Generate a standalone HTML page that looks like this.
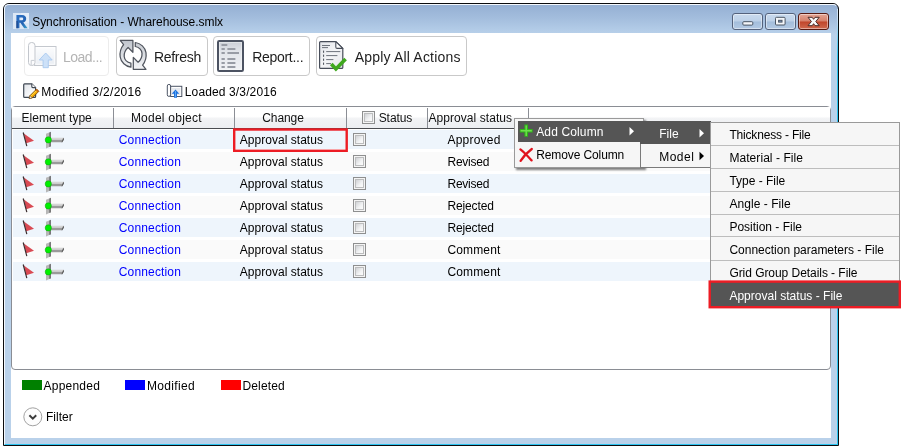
<!DOCTYPE html>
<html><head><meta charset="utf-8"><title>Synchronisation</title>
<style>
html,body{margin:0;padding:0;background:#fff;}
body{width:901px;height:447px;position:relative;overflow:hidden;font-family:"Liberation Sans",sans-serif;}
.a{position:absolute;box-sizing:border-box;}
.t{position:absolute;white-space:nowrap;line-height:1;font-family:"Liberation Sans",sans-serif;}
#win{left:3px;top:3px;width:836px;height:443px;border:1px solid #0b0c0e;border-radius:6px 6px 0 0;
 background:linear-gradient(#94afd3 0px,#a3bddd 14px,#b4cde8 27px,#b9d1ea 31px,#b9d1ea 100%);}
#winhi{left:4px;top:4px;width:834px;height:441px;border:1px solid #f4f8fd;border-right-color:transparent;border-bottom-color:#2cc4f0;border-radius:5px 5px 0 0;}
#client{left:11px;top:33px;width:820px;height:405px;background:#fff;}
.tb{border:1px solid #c9c9c9;border-radius:4px;background:#fff;top:36px;height:40px;}
.cap{top:13px;height:17px;border:1px solid #54627c;border-radius:3px;
 background:linear-gradient(#c9daee 0,#bdd1e8 48%,#a3bddb 52%,#b3cae4 100%);box-shadow:inset 0 0 0 1px rgba(255,255,255,.45);}
#lv{left:11px;top:106px;width:820px;height:264px;border:1px solid #8a8d94;border-radius:4px;background:#fff;}
#hdr{left:12px;top:107px;width:818px;height:21px;background:linear-gradient(#fff 0,#fff 45%,#f2f3f5 55%,#eceef1 100%);}
#hdrline{left:12px;top:128px;width:818px;height:1px;background:#4a4c50;}
.sep{top:108px;width:1px;height:20px;background:#8b8e95;}
.band{left:12.5px;width:817.5px;height:18.6px;}
.cb{width:13px;height:13px;border:1px solid #8e8f8f;background:#f4f4f4;}
.cb i{position:absolute;left:1px;top:1px;width:9px;height:9px;border:1px solid #bcbdbe;box-sizing:border-box;background:linear-gradient(135deg,#d0d2d5,#f2f3f4 60%,#fcfcfc);display:block;}
.menu{background:#f6f6f6;border:1px solid #9a9a9a;}
.sel{background:#555555;}
.red{border:2px solid #ed1c24;}
#redge{left:837px;top:9px;width:1px;height:436px;background:linear-gradient(#d3e4f5 0,#c2dcf3 12px,#5fcdf2 34px,#2cc4f0 48px,#2cc4f0 100%);}
#txt{position:absolute;left:0;top:0;width:901px;height:447px;will-change:transform;}

</style></head>
<body>
<div class="a" id="win"></div>
<div class="a" id="winhi"></div>
<div class="a" id="redge"></div>
<!-- caption buttons -->
<div class="a cap" style="left:732px;width:31px"></div>
<div class="a cap" style="left:765px;width:31px"></div>
<div class="a cap" style="left:798px;width:31px;border-color:#561a12;background:linear-gradient(#e4a594 0,#d5806a 48%,#c0452a 52%,#cf6a4f 100%)"></div>
<svg class="a" style="left:732px;top:13px" width="98" height="17" viewBox="0 0 98 17">
 <rect x="10.8" y="8.7" width="10" height="3.4" rx="1" fill="#f4f6f9" stroke="#4a5563" stroke-width="1"/>
 <rect x="43.5" y="4.3" width="9.6" height="7.7" rx="1" fill="#f4f6f9" stroke="#4a5563" stroke-width="1"/>
 <rect x="46.6" y="7.3" width="3.4" height="1.8" fill="#7f9cc6" stroke="#4a5563" stroke-width="1"/>
 <path d="M76 4.3 L80.2 4.3 L81.6 6.3 L83 4.3 L87.2 4.3 L83.8 8.5 L87.2 12.7 L83 12.7 L81.6 10.7 L80.2 12.7 L76 12.7 L79.4 8.5 Z" fill="#fafafa" stroke="#4a2a26" stroke-width="1" stroke-linejoin="round"/>
</svg>
<div class="a" id="client"></div>
<!-- app icon R -->
<svg class="a" style="left:13px;top:13px" width="16" height="16" viewBox="0 0 16 16">
 <defs><linearGradient id="rr" x1="0" y1="0" x2="1" y2="1"><stop offset="0" stop-color="#2a6fc4"/><stop offset=".6" stop-color="#2564b4"/><stop offset="1" stop-color="#3aa3cc"/></linearGradient></defs>
 <rect width="16" height="16" fill="#dce7f5"/><rect x="8" width="8" height="10" fill="#e6eef9"/>
 <path d="M3.4 15.2 V2 H9 C12 2 13.2 3.8 13.2 5.8 C13.2 7.8 12 9 10.3 9.4 L14.6 15.2 H11.2 L7.4 9.8 H6.4 V15.2 Z M6.4 4.6 V7.3 H8.6 C9.7 7.3 10.2 6.8 10.2 5.9 C10.2 5.1 9.7 4.6 8.6 4.6 Z" fill="url(#rr)" fill-rule="evenodd"/>
 <path d="M3.4 15.2 V8 L4.6 8 L4.6 15.2 Z" fill="#17397a" opacity=".8"/>
</svg>
<!-- toolbar buttons -->
<div class="a tb" style="left:24px;width:85px;border-color:#ececec"></div>
<div class="a tb" style="left:115.5px;width:92px"></div>
<div class="a tb" style="left:213px;width:97px"></div>
<div class="a tb" style="left:316px;width:151px"></div>
<!-- load icon -->
<svg class="a" style="left:26px;top:39px" width="34" height="32" viewBox="26 39 34 32">
 <defs><linearGradient id="lg" x1="0" y1="0" x2="0" y2="1"><stop offset="0" stop-color="#fcfdfe"/><stop offset="1" stop-color="#e9edf3"/></linearGradient></defs><rect x="34.5" y="46.5" width="21.5" height="19" fill="url(#lg)" stroke="#c4c8ce" stroke-width="1"/><rect x="35.8" y="47.8" width="19" height="16.4" fill="none" stroke="#fff" stroke-width=".8"/>
 <rect x="28.5" y="42.5" width="6.5" height="23" rx="3" fill="#fcfcfd" stroke="#c2c6cc" stroke-width="1"/>
 <path d="M31.2 65 L31.2 60.4 L34.4 60.4" fill="none" stroke="#c8ccd2" stroke-width="1"/>
 <path d="M45.7 53 L52.2 60 L48.3 60 L48.3 67.7 L43.1 67.7 L43.1 60 L39.2 60 Z" fill="#cde1f8" stroke="#a9c9ef" stroke-width=".9"/>
</svg>
<!-- refresh icon -->
<svg class="a" style="left:118px;top:38px" width="32" height="34" viewBox="118 38 32 34">
 <defs><linearGradient id="rg" x1="0" y1="0" x2="0" y2="1"><stop offset="0" stop-color="#bfc4cc"/><stop offset="1" stop-color="#f4f5f7"/></linearGradient>
 <linearGradient id="rg2" x1="0" y1="1" x2="0" y2="0"><stop offset="0" stop-color="#c6cad1"/><stop offset="1" stop-color="#f4f5f7"/></linearGradient></defs>
 <path d="M120.2 40.4 H132.9 V52.3 L128.1 47.5 C125.2 50 124 53.5 124.2 56.5 C124.6 59.8 126.8 62.3 130.9 63.2 V67.2 C125.5 66.5 121 62.3 120.2 57 C119.6 52.5 120.8 48 123.6 44.6 Z" fill="url(#rg)" stroke="#50555e" stroke-width="1.25" stroke-linejoin="round"/>
 <path transform="rotate(180 133.1 54.85)" d="M120.2 40.4 H132.9 V52.3 L128.1 47.5 C125.2 50 124 53.5 124.2 56.5 C124.6 59.8 126.8 62.3 130.9 63.2 V67.2 C125.5 66.5 121 62.3 120.2 57 C119.6 52.5 120.8 48 123.6 44.6 Z" fill="url(#rg2)" stroke="#50555e" stroke-width="1.25" stroke-linejoin="round"/>
</svg>
<!-- report icon -->
<svg class="a" style="left:216px;top:39px" width="30" height="34" viewBox="216 39 30 34">
 <defs><linearGradient id="pg" x1="0" y1="0" x2="0" y2="1"><stop offset="0" stop-color="#c9cdd5"/><stop offset=".35" stop-color="#e2e5ea"/><stop offset="1" stop-color="#f1f2f5"/></linearGradient></defs>
 <rect x="218" y="41" width="25" height="30" rx="1.2" fill="url(#pg)" stroke="#4c5362" stroke-width="2"/>
 <rect x="219.4" y="42.4" width="22.2" height="27.2" fill="none" stroke="#f5f6f8" stroke-width=".6" opacity=".8"/>
 <g fill="#989ca5">
 <rect x="221.5" y="44" width="5.8" height="2"/>
 <rect x="221.5" y="48" width="3.3" height="2"/><rect x="227.4" y="48" width="8" height="2"/>
 <rect x="221.5" y="52" width="3.3" height="2"/><rect x="227.4" y="52" width="11.6" height="2"/>
 <rect x="221.5" y="58" width="3.3" height="2"/><rect x="227.4" y="58" width="8" height="2"/>
 <rect x="221.5" y="62" width="3.3" height="2"/><rect x="227.4" y="62" width="8" height="2"/>
 <rect x="221.5" y="66" width="3.3" height="2"/><rect x="227.4" y="66" width="8" height="2"/>
 </g>
</svg>
<!-- apply icon -->
<svg class="a" style="left:317px;top:39px" width="34" height="34" viewBox="317 39 34 34">
 <defs><linearGradient id="dg" x1="0" y1="0" x2="1" y2="1"><stop offset="0" stop-color="#e1e4e9"/><stop offset=".5" stop-color="#f4f5f7"/><stop offset="1" stop-color="#e4e6ea"/></linearGradient></defs>
 <path d="M320.6 41.6 H335.8 L342.8 48.4 V67.4 Q342.8 68.4 341.8 68.4 H320.6 Q319.6 68.4 319.6 67.4 V42.6 Q319.6 41.6 320.6 41.6 Z" fill="url(#dg)" stroke="#474d59" stroke-width="1.2"/>
 <path d="M335.8 41.6 V47 Q335.8 48.4 337.2 48.4 H342.8 Z" fill="#fcfcfd" stroke="#474d59" stroke-width="1.1" stroke-linejoin="round"/>
 <g stroke="#6d727b" stroke-width="1" fill="none">
 <path d="M322 45.5 H330"/><path d="M322 47.6 H328"/>
 <path d="M326.2 51.6 H340.3"/><path d="M326.2 55.6 H337.4"/><path d="M326.2 59.6 H333.4"/><path d="M326.2 63.6 H331"/>
 </g>
 <g fill="#555a63"><rect x="323" y="50.6" width="1.1" height="2.2"/><rect x="323" y="54.6" width="1.1" height="2.2"/><rect x="323" y="58.6" width="1.1" height="2.2"/><rect x="323" y="62.6" width="1.1" height="2.2"/></g>
 <path d="M331.3 64 L335.9 68.9 L345.6 58.9" fill="none" stroke="#3fa81e" stroke-width="3.6" stroke-linejoin="miter"/>
</svg>
<!-- status line icons -->
<svg class="a" style="left:20px;top:80px" width="22" height="22" viewBox="20 80 22 22">
 <defs><linearGradient id="mg" x1="0" y1="0" x2="1" y2="1"><stop offset="0" stop-color="#dfe3e8"/><stop offset=".6" stop-color="#f6f7f9"/><stop offset="1" stop-color="#fff"/></linearGradient></defs>
 <path d="M24.6 83.8 H31.8 L35.6 87.6 V96.4 Q35.6 97.3 34.7 97.3 H24.6 Q23.7 97.3 23.7 96.4 V84.7 Q23.7 83.8 24.6 83.8 Z" fill="url(#mg)" stroke="#3f4752" stroke-width="1.2"/>
 <path d="M31.8 83.8 V86.6 Q31.8 87.6 32.8 87.6 H35.6" fill="#fff" stroke="#3f4752" stroke-width="1.1"/>
 <path d="M29.2 98.5 L30 95.6 L36.6 89 L38.9 91.3 L32.3 97.9 Z" fill="#f7a600" stroke="#5a3608" stroke-width=".7"/>
 <path d="M30.6 96.6 L37 90.2" stroke="#ffe14a" stroke-width="1" fill="none"/>
 <path d="M36.6 89 L38.9 91.3 L37.9 92.3 L35.6 90 Z" fill="#c2601a"/>
 <path d="M29.2 98.5 L30 95.6 L32.3 97.9 Z" fill="#f3f3f3" stroke="#5a3608" stroke-width=".5"/>
</svg>
<svg class="a" style="left:165px;top:82px" width="20" height="18" viewBox="165 82 20 18">
 <rect x="170.6" y="86.3" width="11.2" height="10.2" fill="#fff" stroke="#4d5666" stroke-width="1"/>
 <rect x="172" y="88" width="8.4" height="7" fill="#e6e9ee"/>
 <rect x="167.3" y="84.4" width="3.3" height="12" rx="1.6" fill="#fff" stroke="#4d5666" stroke-width="1"/>
 <path d="M175.5 89.5 L179.3 93.8 L177 93.8 L177 97.8 L174 97.8 L174 93.8 L171.7 93.8 Z" fill="#1f72dc"/>
 <path d="M175.5 91 L175.5 97" stroke="#58a6f5" stroke-width="1" fill="none"/>
</svg>
<!-- list view -->
<div class="a" id="lv"></div>
<div class="a" id="hdr"></div>
<div class="a" id="hdrline"></div>
<div class="a sep" style="left:113px"></div>
<div class="a sep" style="left:234px"></div>
<div class="a sep" style="left:346px"></div>
<div class="a sep" style="left:427px"></div>
<div class="a sep" style="left:528px"></div>
<div class="a band" style="top:130px;background:#eef5fc"></div>
<div class="a band" style="top:152px;background:#fafafa"></div>
<div class="a band" style="top:174px;background:#eef5fc"></div>
<div class="a band" style="top:196px;background:#fafafa"></div>
<div class="a band" style="top:218px;background:#eef5fc"></div>
<div class="a band" style="top:240px;background:#fafafa"></div>
<div class="a band" style="top:262px;background:#eef5fc"></div>
<div class="a cb" style="left:362px;top:111px"><i></i></div>
<div class="a cb" style="left:353px;top:133.0px"><i></i></div>
<svg class="a" style="left:20px;top:129.5px" width="48" height="20" viewBox="20 -10 48 20">
 <path d="M23.8 -6.6 L34 0.7 L26.2 3.3 Z" fill="#d94a53"/>
 <path d="M23.2 -7.5 L26.8 6.1" stroke="#3d2f31" stroke-width="1.2" fill="none"/>
 <path d="M50.9 -2.3 H63.9 V-0.2 H50.9 Z" fill="#d6d6d6"/>
 <path d="M50.9 -0.2 H63.9 L62.2 2.3 H50.9 Z" fill="#9a9a9a"/>
 <path d="M63.9 -2.3 L63.9 -0.4 L62.3 2.3 L61.5 2.3 L62.9 -1.2 Z" fill="#565656"/>
 <path d="M46 -6.3 L49.2 -7.6 L49.2 7.1 L46 8.4 Z" fill="#b7b7b7"/>
 <path d="M49.2 -7.6 L50.9 -8.3 L50.9 6.4 L49.2 7.1 Z" fill="#6a6a6a"/>
 <circle cx="48.3" cy="-0.1" r="3.1" fill="#00f000" stroke="#14a814" stroke-width=".6"/>
</svg>
<div class="a cb" style="left:353px;top:155.0px"><i></i></div>
<svg class="a" style="left:20px;top:151.5px" width="48" height="20" viewBox="20 -10 48 20">
 <path d="M23.8 -6.6 L34 0.7 L26.2 3.3 Z" fill="#d94a53"/>
 <path d="M23.2 -7.5 L26.8 6.1" stroke="#3d2f31" stroke-width="1.2" fill="none"/>
 <path d="M50.9 -2.3 H63.9 V-0.2 H50.9 Z" fill="#d6d6d6"/>
 <path d="M50.9 -0.2 H63.9 L62.2 2.3 H50.9 Z" fill="#9a9a9a"/>
 <path d="M63.9 -2.3 L63.9 -0.4 L62.3 2.3 L61.5 2.3 L62.9 -1.2 Z" fill="#565656"/>
 <path d="M46 -6.3 L49.2 -7.6 L49.2 7.1 L46 8.4 Z" fill="#b7b7b7"/>
 <path d="M49.2 -7.6 L50.9 -8.3 L50.9 6.4 L49.2 7.1 Z" fill="#6a6a6a"/>
 <circle cx="48.3" cy="-0.1" r="3.1" fill="#00f000" stroke="#14a814" stroke-width=".6"/>
</svg>
<div class="a cb" style="left:353px;top:177.0px"><i></i></div>
<svg class="a" style="left:20px;top:173.5px" width="48" height="20" viewBox="20 -10 48 20">
 <path d="M23.8 -6.6 L34 0.7 L26.2 3.3 Z" fill="#d94a53"/>
 <path d="M23.2 -7.5 L26.8 6.1" stroke="#3d2f31" stroke-width="1.2" fill="none"/>
 <path d="M50.9 -2.3 H63.9 V-0.2 H50.9 Z" fill="#d6d6d6"/>
 <path d="M50.9 -0.2 H63.9 L62.2 2.3 H50.9 Z" fill="#9a9a9a"/>
 <path d="M63.9 -2.3 L63.9 -0.4 L62.3 2.3 L61.5 2.3 L62.9 -1.2 Z" fill="#565656"/>
 <path d="M46 -6.3 L49.2 -7.6 L49.2 7.1 L46 8.4 Z" fill="#b7b7b7"/>
 <path d="M49.2 -7.6 L50.9 -8.3 L50.9 6.4 L49.2 7.1 Z" fill="#6a6a6a"/>
 <circle cx="48.3" cy="-0.1" r="3.1" fill="#00f000" stroke="#14a814" stroke-width=".6"/>
</svg>
<div class="a cb" style="left:353px;top:199.0px"><i></i></div>
<svg class="a" style="left:20px;top:195.5px" width="48" height="20" viewBox="20 -10 48 20">
 <path d="M23.8 -6.6 L34 0.7 L26.2 3.3 Z" fill="#d94a53"/>
 <path d="M23.2 -7.5 L26.8 6.1" stroke="#3d2f31" stroke-width="1.2" fill="none"/>
 <path d="M50.9 -2.3 H63.9 V-0.2 H50.9 Z" fill="#d6d6d6"/>
 <path d="M50.9 -0.2 H63.9 L62.2 2.3 H50.9 Z" fill="#9a9a9a"/>
 <path d="M63.9 -2.3 L63.9 -0.4 L62.3 2.3 L61.5 2.3 L62.9 -1.2 Z" fill="#565656"/>
 <path d="M46 -6.3 L49.2 -7.6 L49.2 7.1 L46 8.4 Z" fill="#b7b7b7"/>
 <path d="M49.2 -7.6 L50.9 -8.3 L50.9 6.4 L49.2 7.1 Z" fill="#6a6a6a"/>
 <circle cx="48.3" cy="-0.1" r="3.1" fill="#00f000" stroke="#14a814" stroke-width=".6"/>
</svg>
<div class="a cb" style="left:353px;top:221.0px"><i></i></div>
<svg class="a" style="left:20px;top:217.5px" width="48" height="20" viewBox="20 -10 48 20">
 <path d="M23.8 -6.6 L34 0.7 L26.2 3.3 Z" fill="#d94a53"/>
 <path d="M23.2 -7.5 L26.8 6.1" stroke="#3d2f31" stroke-width="1.2" fill="none"/>
 <path d="M50.9 -2.3 H63.9 V-0.2 H50.9 Z" fill="#d6d6d6"/>
 <path d="M50.9 -0.2 H63.9 L62.2 2.3 H50.9 Z" fill="#9a9a9a"/>
 <path d="M63.9 -2.3 L63.9 -0.4 L62.3 2.3 L61.5 2.3 L62.9 -1.2 Z" fill="#565656"/>
 <path d="M46 -6.3 L49.2 -7.6 L49.2 7.1 L46 8.4 Z" fill="#b7b7b7"/>
 <path d="M49.2 -7.6 L50.9 -8.3 L50.9 6.4 L49.2 7.1 Z" fill="#6a6a6a"/>
 <circle cx="48.3" cy="-0.1" r="3.1" fill="#00f000" stroke="#14a814" stroke-width=".6"/>
</svg>
<div class="a cb" style="left:353px;top:243.0px"><i></i></div>
<svg class="a" style="left:20px;top:239.5px" width="48" height="20" viewBox="20 -10 48 20">
 <path d="M23.8 -6.6 L34 0.7 L26.2 3.3 Z" fill="#d94a53"/>
 <path d="M23.2 -7.5 L26.8 6.1" stroke="#3d2f31" stroke-width="1.2" fill="none"/>
 <path d="M50.9 -2.3 H63.9 V-0.2 H50.9 Z" fill="#d6d6d6"/>
 <path d="M50.9 -0.2 H63.9 L62.2 2.3 H50.9 Z" fill="#9a9a9a"/>
 <path d="M63.9 -2.3 L63.9 -0.4 L62.3 2.3 L61.5 2.3 L62.9 -1.2 Z" fill="#565656"/>
 <path d="M46 -6.3 L49.2 -7.6 L49.2 7.1 L46 8.4 Z" fill="#b7b7b7"/>
 <path d="M49.2 -7.6 L50.9 -8.3 L50.9 6.4 L49.2 7.1 Z" fill="#6a6a6a"/>
 <circle cx="48.3" cy="-0.1" r="3.1" fill="#00f000" stroke="#14a814" stroke-width=".6"/>
</svg>
<div class="a cb" style="left:353px;top:265.0px"><i></i></div>
<svg class="a" style="left:20px;top:261.5px" width="48" height="20" viewBox="20 -10 48 20">
 <path d="M23.8 -6.6 L34 0.7 L26.2 3.3 Z" fill="#d94a53"/>
 <path d="M23.2 -7.5 L26.8 6.1" stroke="#3d2f31" stroke-width="1.2" fill="none"/>
 <path d="M50.9 -2.3 H63.9 V-0.2 H50.9 Z" fill="#d6d6d6"/>
 <path d="M50.9 -0.2 H63.9 L62.2 2.3 H50.9 Z" fill="#9a9a9a"/>
 <path d="M63.9 -2.3 L63.9 -0.4 L62.3 2.3 L61.5 2.3 L62.9 -1.2 Z" fill="#565656"/>
 <path d="M46 -6.3 L49.2 -7.6 L49.2 7.1 L46 8.4 Z" fill="#b7b7b7"/>
 <path d="M49.2 -7.6 L50.9 -8.3 L50.9 6.4 L49.2 7.1 Z" fill="#6a6a6a"/>
 <circle cx="48.3" cy="-0.1" r="3.1" fill="#00f000" stroke="#14a814" stroke-width=".6"/>
</svg>
<!-- legend -->
<div class="a" style="left:22px;top:380px;width:20px;height:10px;background:#008000"></div>
<div class="a" style="left:125px;top:380px;width:20px;height:10px;background:#0000ff"></div>
<div class="a" style="left:221px;top:380px;width:20px;height:10px;background:#ff0000"></div>
<svg class="a" style="left:22px;top:406px" width="22" height="22" viewBox="22 406 22 22">
 <circle cx="32.8" cy="416.8" r="9" fill="#fdfdfd" stroke="#a2a2a2" stroke-width="1"/>
 <path d="M29.4 415.2 L32.8 418.6 L36.2 415.2" fill="none" stroke="#3c3c3c" stroke-width="2"/>
</svg>
<!-- red annotation in grid -->
<svg class="a" style="left:230px;top:125px" width="122" height="30" viewBox="230 125 122 30"><rect x="234.2" y="129.5" width="112.5" height="21.3" fill="none" stroke="#ed1c24" stroke-width="2.4"/></svg>
<!-- menu 1 -->
<div class="a menu" style="left:513.5px;top:117.5px;width:130px;height:50px;box-shadow:2px 2px 2px rgba(0,0,0,.5)"></div>
<div class="a sel" style="left:517.5px;top:121px;width:123px;height:20.5px"></div>
<svg class="a" style="left:518px;top:122px" width="16" height="44" viewBox="518 122 16 44">
 <path d="M526.2 124.6 V136.8 M519.8 130.8 H532.6" stroke="#2fb51a" stroke-width="3.6" fill="none"/><path d="M526.2 125.4 V136 M520.6 130.8 H531.8" stroke="#6fe04c" stroke-width="1.4" fill="none"/>
 <path d="M520.4 149.4 C524 152 528 156.5 531.6 160.4 M531.8 149 C527 152.5 523 157 520.6 160.8" stroke="#e0131d" stroke-width="2.3" fill="none" stroke-linecap="round"/>
</svg>
<!-- menu 2 -->
<div class="a menu" style="left:640px;top:121px;width:70.5px;height:47px;border-color:#7a7a7a"></div>
<div class="a sel" style="left:640px;top:121px;width:70.5px;height:23px"></div>
<svg class="a" style="left:625px;top:120px" width="86" height="48" viewBox="625 120 86 48">
 <path d="M629.5 127 L634 131.2 L629.5 135.4 Z" fill="#fff"/>
 <path d="M699.5 129 L704 133.2 L699.5 137.4 Z" fill="#fff"/>
 <path d="M699.5 151.8 L704 156 L699.5 160.2 Z" fill="#000"/>
</svg>
<!-- menu 3 -->
<div class="a menu" style="left:710px;top:122px;width:190px;height:186px"></div>
<div class="a" style="left:711px;top:144.9px;width:188px;height:1px;background:#bdbdbd"></div>
<div class="a" style="left:711px;top:168.1px;width:188px;height:1px;background:#bdbdbd"></div>
<div class="a" style="left:711px;top:191.2px;width:188px;height:1px;background:#bdbdbd"></div>
<div class="a" style="left:711px;top:214.3px;width:188px;height:1px;background:#bdbdbd"></div>
<div class="a" style="left:711px;top:236.3px;width:188px;height:1px;background:#bdbdbd"></div>
<div class="a" style="left:711px;top:259.8px;width:188px;height:1px;background:#bdbdbd"></div>
<div class="a sel" style="left:710px;top:282px;width:189px;height:25px"></div>
<svg class="a" style="left:705px;top:277px" width="196" height="35" viewBox="705 277 196 35"><rect x="709.7" y="281.6" width="190.1" height="25.6" fill="none" stroke="#ed1c24" stroke-width="2.4"/></svg>

<div id="txt">
<span class="t" style="left:32.2px;top:16.04px;font-size:12px;color:#000;letter-spacing:-0.039px">Synchronisation - Wharehouse.smlx</span>
<span class="t" style="left:63.0px;top:50.15px;font-size:14px;color:#b4b4b4;letter-spacing:-0.518px">Load...</span>
<span class="t" style="left:153.9px;top:49.95px;font-size:14px;color:#1e1e1e;letter-spacing:-0.276px">Refresh</span>
<span class="t" style="left:252.2px;top:49.95px;font-size:14px;color:#1e1e1e;letter-spacing:-0.289px">Report...</span>
<span class="t" style="left:354.7px;top:49.75px;font-size:14px;color:#1e1e1e;letter-spacing:0.186px">Apply All Actions</span>
<span class="t" style="left:41.2px;top:85.84px;font-size:12px;color:#000;letter-spacing:0.288px">Modified 3/2/2016</span>
<span class="t" style="left:184.8px;top:85.84px;font-size:12px;color:#000;letter-spacing:0.127px">Loaded 3/3/2016</span>
<span class="t" style="left:21.6px;top:111.84px;font-size:12px;color:#111;letter-spacing:0.013px">Element type</span>
<span class="t" style="left:130.9px;top:111.84px;font-size:12px;color:#111;letter-spacing:0.238px">Model object</span>
<span class="t" style="left:262.2px;top:111.84px;font-size:12px;color:#111;letter-spacing:-0.074px">Change</span>
<span class="t" style="left:378.7px;top:111.84px;font-size:12px;color:#111;letter-spacing:-0.072px">Status</span>
<span class="t" style="left:428.4px;top:111.84px;font-size:12px;color:#111;letter-spacing:0.072px">Approval status</span>
<span class="t" style="left:118.8px;top:133.54px;font-size:12px;color:#0000ff;letter-spacing:0.148px">Connection</span>
<span class="t" style="left:239.7px;top:133.54px;font-size:12px;color:#000;letter-spacing:0.039px">Approval status</span>
<span class="t" style="left:447.5px;top:133.54px;font-size:12px;color:#000;letter-spacing:0.216px">Approved</span>
<span class="t" style="left:118.8px;top:155.54px;font-size:12px;color:#0000ff;letter-spacing:0.148px">Connection</span>
<span class="t" style="left:239.7px;top:155.54px;font-size:12px;color:#000;letter-spacing:0.039px">Approval status</span>
<span class="t" style="left:447.5px;top:155.54px;font-size:12px;color:#000;letter-spacing:-0.251px">Revised</span>
<span class="t" style="left:118.8px;top:177.54px;font-size:12px;color:#0000ff;letter-spacing:0.148px">Connection</span>
<span class="t" style="left:239.7px;top:177.54px;font-size:12px;color:#000;letter-spacing:0.039px">Approval status</span>
<span class="t" style="left:447.5px;top:177.54px;font-size:12px;color:#000;letter-spacing:-0.251px">Revised</span>
<span class="t" style="left:118.8px;top:199.54px;font-size:12px;color:#0000ff;letter-spacing:0.148px">Connection</span>
<span class="t" style="left:239.7px;top:199.54px;font-size:12px;color:#000;letter-spacing:0.039px">Approval status</span>
<span class="t" style="left:447.5px;top:199.54px;font-size:12px;color:#000;letter-spacing:-0.147px">Rejected</span>
<span class="t" style="left:118.8px;top:221.54px;font-size:12px;color:#0000ff;letter-spacing:0.148px">Connection</span>
<span class="t" style="left:239.7px;top:221.54px;font-size:12px;color:#000;letter-spacing:0.039px">Approval status</span>
<span class="t" style="left:447.5px;top:221.54px;font-size:12px;color:#000;letter-spacing:-0.147px">Rejected</span>
<span class="t" style="left:118.8px;top:243.54px;font-size:12px;color:#0000ff;letter-spacing:0.148px">Connection</span>
<span class="t" style="left:239.7px;top:243.54px;font-size:12px;color:#000;letter-spacing:0.039px">Approval status</span>
<span class="t" style="left:447.5px;top:243.54px;font-size:12px;color:#000;letter-spacing:0.126px">Comment</span>
<span class="t" style="left:118.8px;top:265.54px;font-size:12px;color:#0000ff;letter-spacing:0.148px">Connection</span>
<span class="t" style="left:239.7px;top:265.54px;font-size:12px;color:#000;letter-spacing:0.039px">Approval status</span>
<span class="t" style="left:447.5px;top:265.54px;font-size:12px;color:#000;letter-spacing:0.126px">Comment</span>
<span class="t" style="left:536.2px;top:126.14px;font-size:12px;color:#fff;letter-spacing:0.135px">Add Column</span>
<span class="t" style="left:536.2px;top:149.14px;font-size:12px;color:#000;letter-spacing:-0.106px">Remove Column</span>
<span class="t" style="left:659.2px;top:128.04px;font-size:12px;color:#fff;letter-spacing:0.014px">File</span>
<span class="t" style="left:659.2px;top:151.14px;font-size:12px;color:#000;letter-spacing:0.503px">Model</span>
<span class="t" style="left:729.4px;top:128.54px;font-size:12px;color:#000;letter-spacing:-0.183px">Thickness - File</span>
<span class="t" style="left:729.4px;top:151.64px;font-size:12px;color:#000;letter-spacing:0.067px">Material - File</span>
<span class="t" style="left:729.4px;top:174.74px;font-size:12px;color:#000;letter-spacing:-0.020px">Type - File</span>
<span class="t" style="left:729.4px;top:197.84px;font-size:12px;color:#000;letter-spacing:0.058px">Angle - File</span>
<span class="t" style="left:729.4px;top:220.94px;font-size:12px;color:#000;letter-spacing:-0.007px">Position - File</span>
<span class="t" style="left:729.4px;top:244.04px;font-size:12px;color:#000;letter-spacing:-0.005px">Connection parameters - File</span>
<span class="t" style="left:729.4px;top:267.14px;font-size:12px;color:#000;letter-spacing:-0.051px">Grid Group Details - File</span>
<span class="t" style="left:729.4px;top:290.24px;font-size:12px;color:#fff;letter-spacing:0.017px">Approval status - File</span>
<span class="t" style="left:43.5px;top:379.84px;font-size:12px;color:#000;letter-spacing:0.233px">Appended</span>
<span class="t" style="left:146.9px;top:379.84px;font-size:12px;color:#000;letter-spacing:0.355px">Modified</span>
<span class="t" style="left:242.5px;top:379.84px;font-size:12px;color:#000;letter-spacing:0.132px">Deleted</span>
<span class="t" style="left:45.9px;top:410.84px;font-size:12px;color:#000;letter-spacing:0.038px">Filter</span>
</div>
</body></html>
